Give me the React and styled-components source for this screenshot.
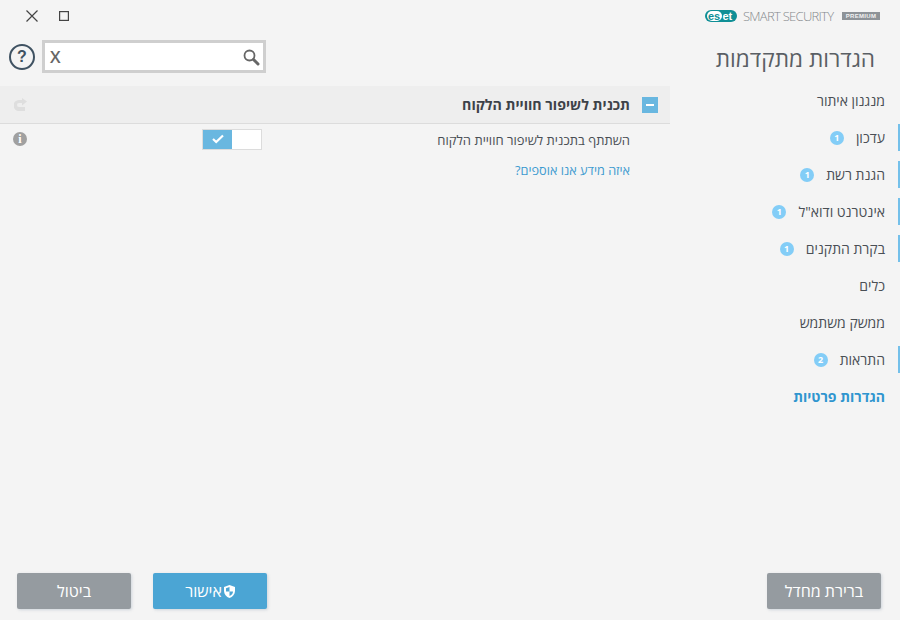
import React from "react";
import styled, { createGlobalStyle } from "styled-components";

const Global = createGlobalStyle`
  html, body { margin: 0; padding: 0; height: 100%; background: #f4f4f4; overflow: hidden; }
  #root { height: 100%; }
  * { box-sizing: border-box; }
`;
const Page = styled.div`
  width: 900px; height: 620px; display: flex; flex-direction: column;
  background: #f4f4f4; color: #4a4f55;
  font-family: "Open Sans", "Noto Sans", "DejaVu Sans", sans-serif;
`;
const TopBar = styled.header`
  height: 32px; flex: none; display: flex; justify-content: space-between; align-items: center;
  padding: 0 20px 0 26px;
`;
const WindowControls = styled.div`display: flex; align-items: center; gap: 21px;`;
const CloseIcon = styled.svg`display: block; width: 12px; height: 12px; fill: none; stroke: #444; stroke-width: 1.2;`;
const MaximizeIcon = styled(CloseIcon)`width: 10px; height: 10px;`;
const Brand = styled.div`display: flex; align-items: center; height: 14px;`;
const EsetPill = styled.div`
  display: flex; align-items: center; width: 32px; height: 12px; border-radius: 6px; background: #0f8f96;
  padding: 1px 1px 1px 1.5px; margin-right: 6px; font-family: "Liberation Sans", sans-serif;
  font-size: 11px; font-weight: 700; line-height: 10px;
`;
const EsetIn = styled.span`
  display: flex; align-items: center; justify-content: center; width: 15px; height: 10px; border-radius: 5px; background: #fff; color: #0f8f96;
`;
const EsetOut = styled.span`color: #fff; margin-left: 1px; line-height: 10px;`;
const Product = styled.span`font-size: 13px; font-weight: 300; color: #85898d; letter-spacing: -0.72px; line-height: 14px; white-space: nowrap; width: 99px;`;
const Premium = styled.span`
  width: 38px; height: 8px; background: #8e9398; color: #f2f2f2; font-family: "Liberation Sans", sans-serif;
  font-size: 6px; font-weight: 700; line-height: 8px; text-align: center; letter-spacing: .3px;
`;
const Body = styled.div`flex: 1; display: flex; min-height: 0;`;
const Main = styled.main`width: 670px; display: flex; flex-direction: column;`;
const SearchRow = styled.div`display: flex; align-items: center; gap: 7px; padding: 8px 0 0 9px; height: 41px;`;
const HelpCircle = styled.span`
  width: 26px; height: 26px; border-radius: 50%; border: 2px solid #3f5262; color: #3f5262; display: flex; align-items: center; justify-content: center;
  font-family: "Liberation Sans", sans-serif; font-size: 16px; font-weight: 700; line-height: 1;
`;
const SearchBox = styled.div`
  width: 224px; height: 33px; background: #fff; border: 3px solid #cfcfcf; display: flex; align-items: center; justify-content: space-between; padding: 0 3px 0 5px;
`;
const ClearX = styled.span`font-size: 17px; font-weight: 600; color: #666; line-height: 1;`;
const SearchIcon = styled.svg`width: 18px; height: 18px; display: block; fill: none; stroke: #666;`;
const SectionHeader = styled.div`
  margin-top: 13px; height: 38px; background: #eeeeee; border-bottom: 1px solid #dcdcdc; display: flex; align-items: center; justify-content: space-between; padding: 0 12px 0 14px;
`;
const UndoIcon = styled.svg`width: 13px; height: 13px; display: block; fill: #dedede;`;
const SectionTitle = styled.div`display: flex; flex-direction: row-reverse; align-items: center; gap: 12px;`;
const Collapse = styled.span`
  width: 16px; height: 16px; background: #69b7e0; display: flex; align-items: center; justify-content: center;
  &::before { content: ""; width: 8px; height: 2px; background: #fff; }
`;
const TitleText = styled.h2`margin: 0; font-size: 14.2px; font-weight: 700; color: #3d4248; direction: rtl; line-height: 18px;`;
const SettingRow = styled.div`
  height: 30px; display: grid; grid-template-columns: 178px 70px 1fr; align-items: center; padding: 0 40px 0 13px;
`;
const InfoIcon = styled.span`
  width: 14px; height: 14px; border-radius: 50%; background: #a0a0a0; color: #fff; display: flex; align-items: center; justify-content: center;
  font-family: "Liberation Serif", serif; font-size: 12px; font-weight: 700; line-height: 1;
`;
const ToggleCell = styled.div`justify-self: start; margin-left: 11px;`;
const Toggle = styled.div`
  width: 60px; height: 21px; background: #fff; border: 1px solid #dcdcdc; display: flex;
`;
const ToggleOn = styled.span`width: 29px; background: #69b7e0; display: flex; align-items: center; justify-content: center;`;
const CheckIcon = styled.svg`width: 12px; height: 10px; display: block; fill: none; stroke: #fff; stroke-width: 2.2;`;
const SettingLabel = styled.div`font-size: 13px; direction: rtl; color: #4a4f55; line-height: 18px; margin-top: 2px;`;
const Link = styled.a`
  display: block; margin-top: 7px; padding-right: 40px; font-size: 12.7px; line-height: 18px; color: #3f9bd0; direction: rtl; text-decoration: none;
`;
const Spacer = styled.div`flex: 1;`;
const Footer = styled.footer`display: flex; gap: 22px; padding: 0 0 11px 17px;`;
const Button = styled.button`
  width: 114px; height: 36px; border: 0; border-radius: 2px; padding: 0; color: #fff; background: ${p => p.$primary ? "#4ba5d4" : "#959ba0"};
  box-shadow: 1px 1px 3px rgba(120, 140, 160, .3); display: flex; align-items: center; justify-content: center; gap: 2px;
  direction: rtl; font-family: inherit; font-size: 16px; line-height: 20px;
`;
const ShieldIcon = styled.svg`width: 11px; height: 13px; display: block;`;
const Sidebar = styled.aside`width: 230px; display: flex; flex-direction: column; align-items: flex-end;`;
const SideTitle = styled.h1`
  margin: 12px 25px 0 0; font-size: 22.6px; font-weight: 400; line-height: 30px; color: #5a5f64; direction: rtl;
`;
const Nav = styled.nav`display: flex; flex-direction: column; gap: 10px; margin-top: 13px; width: 100%;`;
const NavItem = styled.div`
  height: 27px; display: flex; flex-direction: row-reverse; align-items: center; gap: 12px; padding-right: 13px;
  border-right: 2px solid ${p => p.$bar ? "#74c0ea" : "transparent"};
`;
const NavLabel = styled.span`
  direction: rtl; font-size: 14px; line-height: 18px; color: ${p => p.$active ? "#2f95cf" : "#4a4f55"}; font-weight: ${p => p.$active ? 700 : 400};
`;
const Badge = styled.span`
  width: 14px; height: 14px; border-radius: 50%; background: #83cdf7; color: #fff; font-size: 9px; font-weight: 700; line-height: 14px; text-align: center;
`;
const SideFooter = styled.div`margin-top: auto; padding: 0 19px 11px 0;`;

const nav = [
  { label: "מנגנון איתור" },
  { label: "עדכון", badge: 1 },
  { label: "הגנת רשת", badge: 1 },
  { label: 'אינטרנט ודוא"ל', badge: 1 },
  { label: "בקרת התקנים", badge: 1 },
  { label: "כלים" },
  { label: "ממשק משתמש" },
  { label: "התראות", badge: 2 },
  { label: "הגדרות פרטיות", active: true },
];

export default function App() {
  return (
    <Page>
      <Global />
      <TopBar>
        <WindowControls>
          <CloseIcon viewBox="0 0 12 12"><path d="M.5.5l11 11M11.5.5l-11 11" /></CloseIcon>
          <MaximizeIcon viewBox="0 0 10 10"><rect x=".6" y=".6" width="8.8" height="8.8" /></MaximizeIcon>
        </WindowControls>
        <Brand>
          <EsetPill><EsetIn>es</EsetIn><EsetOut>et</EsetOut></EsetPill>
          <Product>SMART SECURITY</Product>
          <Premium>PREMIUM</Premium>
        </Brand>
      </TopBar>
      <Body>
        <Main>
          <SearchRow>
            <HelpCircle>?</HelpCircle>
            <SearchBox>
              <ClearX>X</ClearX>
              <SearchIcon viewBox="0 0 18 18">
                <circle cx="7.5" cy="7.5" r="5" strokeWidth="1.8" />
                <path d="M11.5 11.5l4.5 4.5" strokeWidth="3" strokeLinecap="round" />
              </SearchIcon>
            </SearchBox>
          </SearchRow>
          <SectionHeader>
            <UndoIcon viewBox="0 0 13 13"><path d="M8 0l5 3.5-5 4V5H5a2 2 0 0 0 0 4h6v4H5A5.5 5.5 0 0 1 5 2h3z" /></UndoIcon>
            <SectionTitle>
              <Collapse />
              <TitleText>תכנית לשיפור חוויית הלקוח</TitleText>
            </SectionTitle>
          </SectionHeader>
          <SettingRow>
            <InfoIcon>i</InfoIcon>
            <ToggleCell>
              <Toggle><ToggleOn><CheckIcon viewBox="0 0 12 10"><path d="M1 5l3.2 3L11 1.5" /></CheckIcon></ToggleOn></Toggle>
            </ToggleCell>
            <SettingLabel>השתתף בתכנית לשיפור חוויית הלקוח</SettingLabel>
          </SettingRow>
          <Link href="#">איזה מידע אנו אוספים?</Link>
          <Spacer />
          <Footer>
            <Button>ביטול</Button>
            <Button $primary>
              <ShieldIcon viewBox="0 0 11 13">
                <path d="M5.5 0L11 2v4c0 3.4-2.3 5.8-5.5 7C2.3 11.8 0 9.4 0 6V2z" fill="#fff" />
                <path d="M5.5 2v4.5H2V3.2zM5.5 6.5H9c0 2-1.4 3.6-3.5 4.6z" fill="#4ba5d4" />
              </ShieldIcon>
              אישור
            </Button>
          </Footer>
        </Main>
        <Sidebar>
          <SideTitle>הגדרות מתקדמות</SideTitle>
          <Nav>
            {nav.map(n => (
              <NavItem key={n.label} $bar={!!n.badge}>
                <NavLabel $active={n.active}>{n.label}</NavLabel>
                {n.badge && <Badge>{n.badge}</Badge>}
              </NavItem>
            ))}
          </Nav>
          <SideFooter><Button>ברירת מחדל</Button></SideFooter>
        </Sidebar>
      </Body>
    </Page>
  );
}
